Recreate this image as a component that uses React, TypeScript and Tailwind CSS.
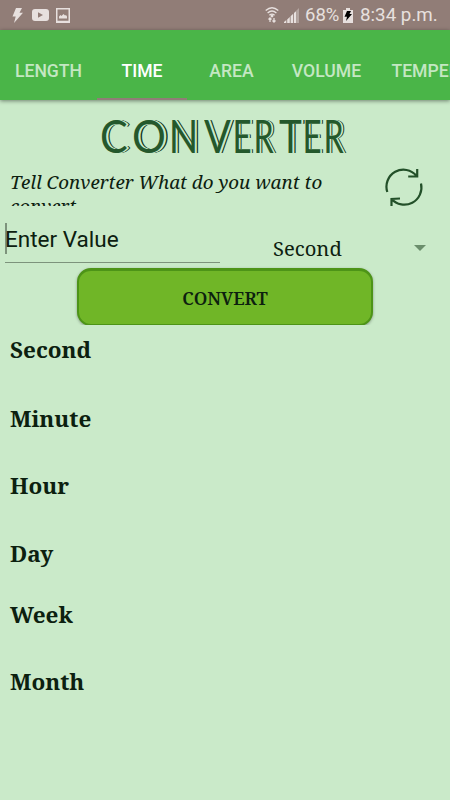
import React from "react";

const tabs = [
  { label: "LENGTH", width: "w-[97px]", active: false },
  { label: "TIME", width: "w-[90px]", active: true },
  { label: "AREA", width: "w-[89px]", active: false },
  { label: "VOLUME", width: "w-[101px]", active: false },
  { label: "TEMPERATURE", width: "w-[151px]", active: false },
];

// Each letter has its own advance and horizontal scale
const letters = [
  { char: "C", style: "w-[32px] scale-x-[0.9]" },
  { char: "O", style: "w-[40px] scale-x-[0.92]" },
  { char: "N", style: "w-[32px] scale-x-[0.84] -indent-[4px]" },
  { char: "V", style: "w-[32px] scale-x-[0.86]" },
  { char: "E", style: "w-[21px] scale-x-[0.72] -indent-[5px]" },
  { char: "R", style: "w-[22px] scale-x-[0.7] -indent-[5px]" },
  { char: "T", style: "w-[27px] scale-x-[0.84]" },
  { char: "E", style: "w-[21px] scale-x-[0.72] -indent-[5px]" },
  { char: "R", style: "w-[22px] scale-x-[0.7] -indent-[5px]" },
];

const units = [
  { name: "Second", height: "h-[69px]" },
  { name: "Minute", height: "h-[67px]" },
  { name: "Hour", height: "h-[68px]" },
  { name: "Day", height: "h-[61px]" },
  { name: "Week", height: "h-[67px]" },
  { name: "Month", height: "h-[68px]" },
];

const StatusBar = () => (
  <div className="flex h-[30px] items-center bg-[#917d77] text-[#e7e0de]">
    {/* Notifications */}
    <svg className="ml-[12px] h-[15px] w-[11px]" viewBox="0 0 11 15" fill="currentColor">
      <path d="M4 0h6L7.5 4.7H11L2 15l1.7-6.6H.5z" />
    </svg>
    <svg className="ml-[9px] h-[12px] w-[17px]" viewBox="0 0 17 12">
      <rect width="17" height="12" rx="3" fill="currentColor" />
      <path d="M6 3.3v5.4L11 6z" fill="#917d77" />
    </svg>
    <svg className="ml-[7px] h-[15px] w-[14px]" viewBox="0 0 14 15">
      <rect x=".75" y=".75" width="12.5" height="13.5" fill="none" stroke="currentColor" strokeWidth="1.5" />
      <path d="M3 10.500V8.500l1.500-1.500 1 1L7.500 6l1.500 1.500 1-.5 1 1.500v2z" fill="currentColor" />
      <path d="M1 13.500h12" stroke="currentColor" strokeWidth="1.500" />
    </svg>

    {/* Wifi, signal and battery */}
    <svg className="ml-[195px] h-[16px] w-[14px]" viewBox="0 0 14 16" fill="none" stroke="currentColor" strokeWidth="1.3">
      <path d="M.7 3.5Q7-2 13.3 3.5M2.6 6Q7 2 11.4 6M4.4 8.3Q7 6 9.6 8.3" />
      <circle cx="7" cy="9" r=".8" fill="currentColor" />
      <path d="M5 15v-4M3.500 12.500 5 11l1.500 1.500M9 11v4m-1.500-1.500L9 15l1.500-1.500" />
    </svg>
    <svg className="ml-[5px] h-[15px] w-[15px]" viewBox="0 0 15 15" fill="currentColor">
      <path d="M0 15v-1l2.300-2v3zM3.200 15v-3.600l2.600-2.400V15zM6.600 15V8.200l2.600-2.500V15zM10 15V5l2.200-2v12z" />
      <path d="M12.500 15V2.500L15 0v15z" opacity=".4" />
    </svg>
    <span className="ml-[6px] w-[38px] whitespace-nowrap font-['Roboto',sans-serif] text-[18.5px] leading-[32px]">68%</span>
    <svg className="h-[15px] w-[10px]" viewBox="0 0 10 15">
      <path d="M0 2h3V0h4v2h3v13H0z" fill="currentColor" />
      <path d="M4 3h4L6.500 6H9l-6 7 1-4.300H1.500z" fill="#000" />
    </svg>
    <span className="ml-[7px] whitespace-nowrap font-['Roboto',sans-serif] text-[18.8px] leading-[32px]">8:34 p.m.</span>
  </div>
);

const App = () => {
  return (
    <div className="h-[800px] w-[450px] overflow-hidden bg-[#caeac9] text-[#0c200f]">
      <StatusBar />

      {/* Tabs */}
      <nav className="relative flex h-[70px] items-end overflow-hidden bg-[#4ab548] shadow-[0_1px_4px_rgba(0,0,0,0.45)]">
        {tabs.map((tab) => (
          <button
            key={tab.label}
            className={`flex h-[58px] shrink-0 items-center justify-center border-b-2 pt-[2px] font-['Roboto',sans-serif] text-[17.6px] font-medium ${tab.width} ${
              tab.active ? "border-[#917d77] text-white" : "border-transparent text-[#c4e7c3]"
            }`}
          >
            {tab.label}
          </button>
        ))}
      </nav>

      {/* Title, inline-style lettering */}
      <h1 className="ml-[100px] flex h-[67px] pt-[3px] font-['Lato',sans-serif] text-[46px] leading-[65px] text-[#24582c] [text-shadow:1.5px_0_0_#caeac9,2.5px_0_0_#caeac9,4px_0_0_#17361c]">
        {letters.map((letter, index) => (
          <span key={index} className={`block origin-left whitespace-nowrap ${letter.style}`}>
            {letter.char}
          </span>
        ))}
      </h1>

      {/* Prompt and refresh */}
      <div className="flex h-[39px]">
        <p className="ml-[10px] w-[350px] overflow-hidden pt-[3px] font-['Noto_Serif','DejaVu_Serif_Condensed','DejaVu_Serif',serif] text-[18.8px] italic leading-[24px]">
          Tell Converter What do you want to
          <br />
          convert
        </p>
        <svg className="ml-[25px] mt-px h-[39px] w-[39px]" viewBox="0 0 39 39" fill="none" stroke="#235029" strokeWidth="2.2">
          <path d="M2.300 24A17 17 0 0 1 31.500 7.800M32.200 1v7.500h-9" />
          <path d="M36 15.500A17.200 17.200 0 0 1 6.500 31M6.500 38V31L15 30.500" />
        </svg>
      </div>

      {/* Value and unit */}
      <div className="flex h-[60px]">
        <div className="ml-[5px] mt-[17px] h-[40px] w-[215px] border-b border-[#7d937c]">
          <div className="h-[31px] border-l-2 border-[#7d937c] font-['Roboto',sans-serif] text-[22.5px] leading-[33px]">
            <span className="-ml-[2px]">Enter Value</span>
          </div>
        </div>
        <div className="ml-[53px] flex h-[60px] w-[154px] items-center justify-between pt-[23px]">
          <span className="font-['Noto_Serif','DejaVu_Serif_Condensed','DejaVu_Serif',serif] text-[20.2px] leading-[28px]">Second</span>
          <svg className="mr-px h-[6px] w-[12px]" viewBox="0 0 12 6">
            <path d="M0 0h12L6 6z" fill="#6b8e6c" />
          </svg>
        </div>
      </div>

      {/* Convert button, its bottom edge is cut by the row */}
      <div className="h-[59px] overflow-hidden px-[77px] pt-[2px]">
        <button className="h-[58px] w-[296px] rounded-[14px] border-2 border-t-[3px] border-[#4d9417] bg-[#70b627] pt-px font-['Noto_Serif','DejaVu_Serif_Condensed','DejaVu_Serif',serif] text-[17.7px] font-semibold shadow-[0_1px_3px_rgba(0,0,0,0.35)]">
          CONVERT
        </button>
      </div>

      {/* Results */}
      <ul className="ml-[10px] font-['Noto_Serif','DejaVu_Serif_Condensed','DejaVu_Serif',serif] text-[22.5px] font-bold leading-[50px]">
        {units.map((unit) => (
          <li key={unit.name} className={unit.height}>
            {unit.name}
          </li>
        ))}
      </ul>
    </div>
  );
};

export default App;
